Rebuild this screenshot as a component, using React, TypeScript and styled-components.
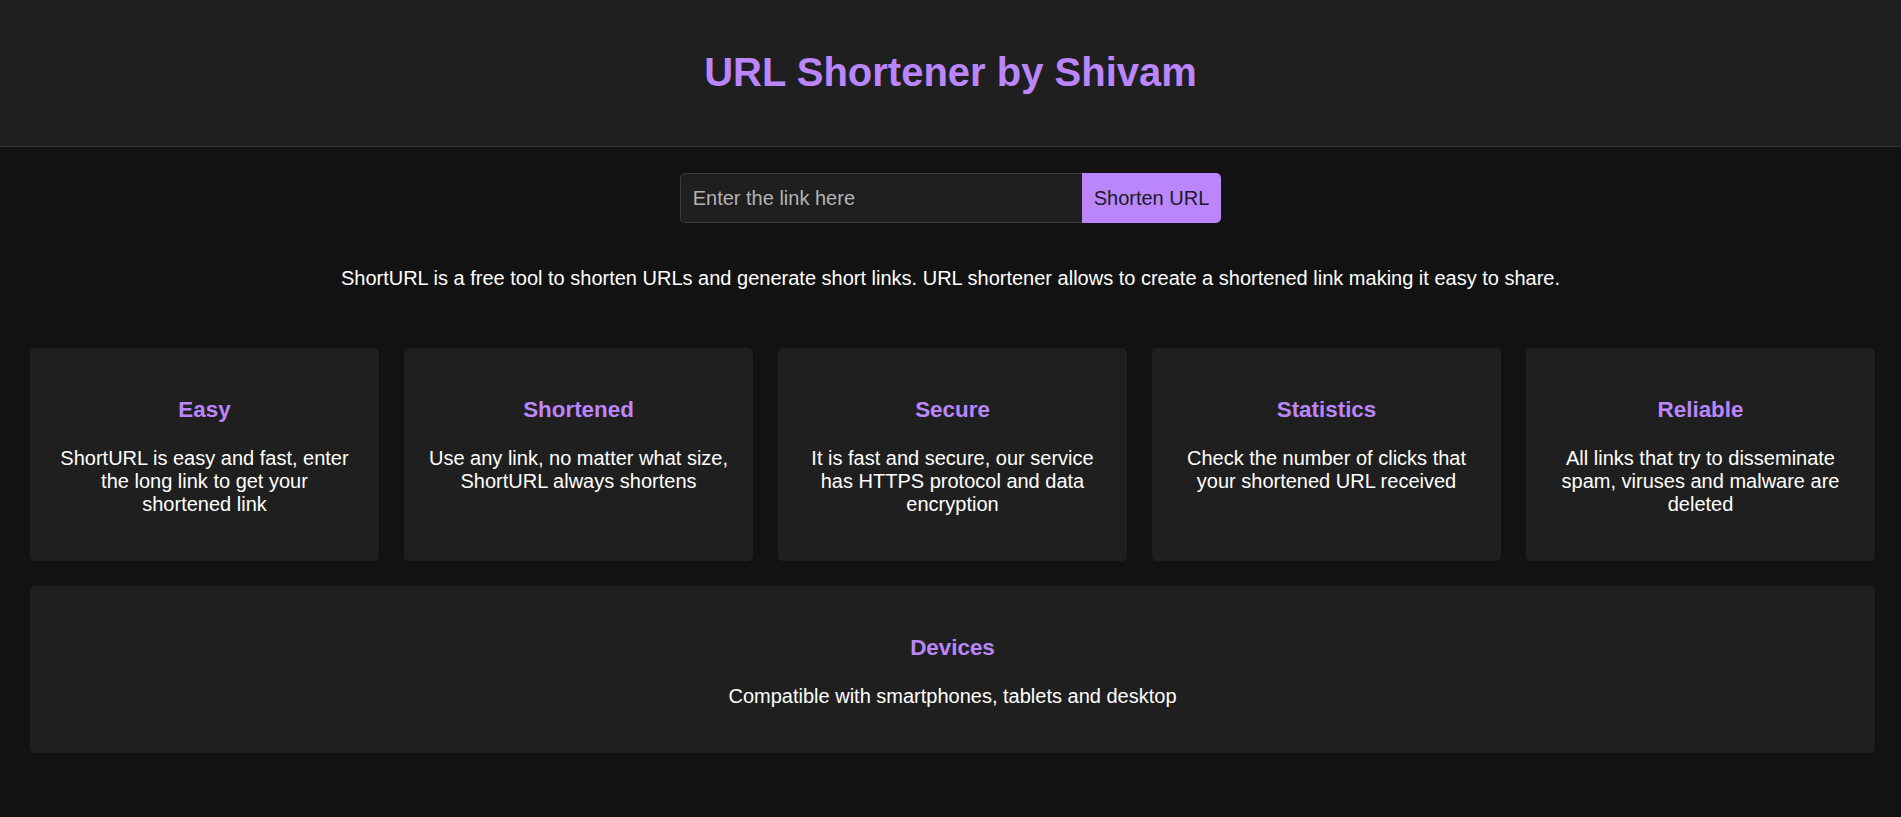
import React from "react";
import styled, { createGlobalStyle } from "styled-components";

const GlobalStyle = createGlobalStyle`
  * { box-sizing: border-box; }
  html, body {
    margin: 0;
    padding: 0;
    background: #121212;
    color: #ffffff;
    font-family: "Liberation Sans", Arial, sans-serif;
  }
`;

const Page = styled.div`
  min-height: 817px;
  background: #121212;
  display: flex;
  flex-direction: column;
`;

const Header = styled.header`
  background: #1f1f1f;
  border-bottom: 1px solid #333333;
  padding: 49px 0 51px;
  text-align: center;
`;

const Title = styled.h1`
  margin: 0;
  font-size: 40px;
  line-height: 46px;
  font-weight: 700;
  color: #bb86fc;
`;

const Form = styled.form`
  display: flex;
  justify-content: center;
  margin-top: 26px;
`;

const Input = styled.input`
  width: 402px;
  height: 50px;
  padding: 0 12px;
  background: #1f1f1f;
  border: 1px solid #3a3a3a;
  border-right: none;
  border-radius: 5px 0 0 5px;
  color: #ffffff;
  font-family: "Liberation Sans", Arial, sans-serif;
  font-size: 20px;
  outline: none;
  &::placeholder {
    color: #b3b3b3;
  }
`;

const Button = styled.button`
  height: 50px;
  padding: 0 12px;
  background: #bb86fc;
  color: #1a1a2a;
  border: none;
  border-radius: 0 5px 5px 0;
  font-family: "Liberation Sans", Arial, sans-serif;
  font-size: 20px;
  cursor: pointer;
`;

const Description = styled.p`
  margin: 44px 0 0;
  text-align: center;
  font-size: 20px;
  line-height: 23px;
  color: #ffffff;
`;

const Features = styled.section`
  display: flex;
  flex-direction: column;
  gap: 25px;
  padding: 0 26px 0 30px;
  margin-top: 58px;
`;

const Row = styled.div`
  display: grid;
  grid-template-columns: repeat(5, 1fr);
  gap: 25px;
`;

const Card = styled.div`
  background: #1f1f1f;
  border-radius: 5px;
  padding: 49px 24.5px 45px;
  text-align: center;
`;

const CardTitle = styled.h3`
  margin: 0 0 24px;
  font-size: 22.4px;
  line-height: 26px;
  font-weight: 700;
  color: #bb86fc;
`;

const CardText = styled.p`
  margin: 0;
  font-size: 20px;
  line-height: 23px;
  color: #ffffff;
`;

const features = [
  {
    title: "Easy",
    text: "ShortURL is easy and fast, enter the long link to get your shortened link",
  },
  {
    title: "Shortened",
    text: "Use any link, no matter what size, ShortURL always shortens",
  },
  {
    title: "Secure",
    text: "It is fast and secure, our service has HTTPS protocol and data encryption",
  },
  {
    title: "Statistics",
    text: "Check the number of clicks that your shortened URL received",
  },
  {
    title: "Reliable",
    text: "All links that try to disseminate spam, viruses and malware are deleted",
  },
];

export default function App() {
  return (
    <>
      <GlobalStyle />
      <Page>
        <Header>
          <Title>URL Shortener by Shivam</Title>
        </Header>
        <Form onSubmit={(e) => e.preventDefault()}>
          <Input type="text" placeholder="Enter the link here" />
          <Button type="submit">Shorten URL</Button>
        </Form>
        <Description>
          ShortURL is a free tool to shorten URLs and generate short links. URL shortener allows to create a shortened link making it easy to share.
        </Description>
        <Features>
          <Row>
            {features.map((f) => (
              <Card key={f.title}>
                <CardTitle>{f.title}</CardTitle>
                <CardText>{f.text}</CardText>
              </Card>
            ))}
          </Row>
          <Card>
            <CardTitle>Devices</CardTitle>
            <CardText>Compatible with smartphones, tablets and desktop</CardText>
          </Card>
        </Features>
      </Page>
    </>
  );
}
